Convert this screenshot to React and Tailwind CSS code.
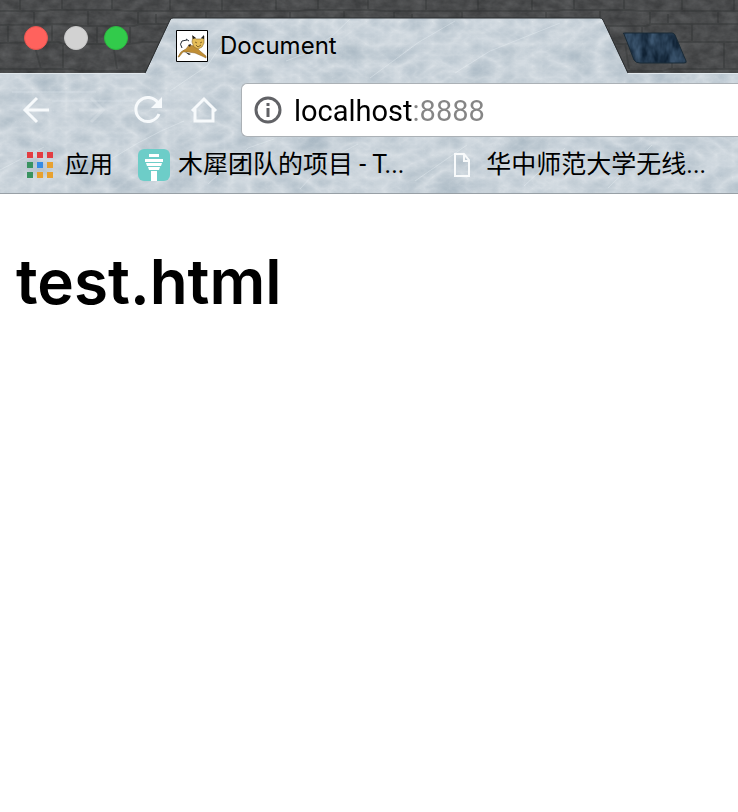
import React from 'react';

const latin = "font-[Inter,'Noto_Sans_CJK_SC',sans-serif]";

function Backdrop() {
  return (
    <svg className="absolute inset-0 h-full w-full" aria-hidden="true">
      <defs>
        <filter id="marble" x="0" y="0" width="100%" height="100%" colorInterpolationFilters="sRGB">
          <feTurbulence type="turbulence" baseFrequency="0.03 0.045" numOctaves="5" seed="8" />
          <feColorMatrix values="-0.18 -0.05 0 0 0.86  -0.15 -0.04 0 0 0.885  -0.13 -0.03 0 0 0.905  0 0 0 0 1" />
          <feComposite in2="SourceGraphic" operator="in" />
        </filter>
        <filter id="stone" x="0" y="0" width="100%" height="100%" colorInterpolationFilters="sRGB">
          <feTurbulence type="fractalNoise" baseFrequency="0.08 0.12" numOctaves="4" seed="3" />
          <feColorMatrix values="0.16 0 0 0 0.21  0.16 0 0 0 0.215  0.16 0 0 0 0.22  0 0 0 0 1" />
        </filter>
        <filter id="night" x="0" y="0" width="100%" height="100%" colorInterpolationFilters="sRGB">
          <feTurbulence type="fractalNoise" baseFrequency="0.12 0.06" numOctaves="3" seed="5" />
          <feColorMatrix values="0.3 0 0 0 0  0.35 0 0 0 0.06  0.4 0 0 0 0.12  0 0 0 0 1" />
          <feComposite in2="SourceGraphic" operator="in" />
        </filter>
        <pattern id="bricks" width="256" height="73" patternUnits="userSpaceOnUse">
          <path
            d="M0 11H44L50 10H118L126 11H256M0 25L70 24 78 26H134L140 24H256M0 43L58 42 64 44H130L142 42H256M0 69H72L80 71H150L158 69H256M20 0V11M62 0V11M112 0V11M170 0V11M222 0V11M34 11V25M88 11V25M138 11V25M156 14V25M206 11V25M8 25V43M52 25V43M97 25V43M130 25V43M180 25V43M232 25V43M34 43L41 69M63 43V69M113 43L117 69M160 43V69M212 43V69"
            fill="none"
            stroke="#292b2c"
            strokeWidth="2"
            opacity="0.3"
          />
        </pattern>
      </defs>
      <rect width="100%" height="73" filter="url(#stone)" />
      <rect width="100%" height="73" fill="url(#bricks)" />
      <rect y="73" width="100%" height="121" filter="url(#marble)" />
      <svg width="738" height="194">
        <clipPath id="tab">
          <path d="M145 74L170 20Q171 18 173 18H600Q602 18 603 20L628 74Z" />
        </clipPath>
        <g clipPath="url(#tab)">
          <rect width="738" height="194" filter="url(#marble)" />
        </g>
        <path d="M145 73L170 20Q171 18 173 18H600Q602 18 603 20L628 73" fill="none" stroke="#292c2e" />
      </svg>
      <path d="M0 73.500H145M628 73.500H5000" stroke="#e1e8ed" />
      <g fill="none" stroke="#f3f8fb" strokeWidth="1" opacity="0.3">
        <path d="M88 175Q138 139 184 121M170 91L207 66 231 31M286 61Q320 51 350 19M370 78L419 42 455 21M455 73L490 51 560 23M208 184L248 148 274 139M300 189Q326 158 358 144M415 181L467 145M524 186L565 148M608 188L652 145M12 92H96M52 101H133M0 170L44 147" />
      </g>
      <path d="M624 34Q622 33 625 33H672Q674 33 675 35L686 61Q687 63 684 63H640Q636 63 634 60Z" fill="#26465d" filter="url(#night)" />
      <path d="M624 34Q622 33 625 33H672Q674 33 675 35L686 61Q687 63 684 63H640Q636 63 634 60Z" fill="none" stroke="#1b2b37" />
    </svg>
  );
}

function TomcatIcon() {
  return (
    <svg className="size-8 shrink-0" viewBox="0 0 32 32" aria-hidden="true">
      <path d="M.5.5H31.500V31.500H.5Z" fill="#fff" stroke="#000" />
      <path d="M2 27Q4 21 10 19L13 15 19 16 24 21 30 26 30 28 26 26 19 23 12 22 7 22 3 27Z" fill="#c08e35" stroke="#8a6426" strokeWidth=".5" />
      <path d="M17 6L20 9H25L28 6 28 13 26 17 22 19 18 17 16 12Z" fill="#e5bd58" stroke="#8a6b2c" strokeWidth=".6" />
      <path d="M16 5L20 8 17 9ZM28 5L25 8 28 9ZM12 15L15 14 14 17ZM9 22L15 24 13 25Z" fill="#222" />
      <path d="M19 12L21 13M24 13L26 12M20 15L22 17 25 15" fill="none" stroke="#866729" strokeWidth="1" />
      <path d="M6 18Q3 14 6 11L11 10M10 9L13 11" fill="none" stroke="#222a35" strokeWidth="1" />
    </svg>
  );
}

function BackIcon({ forward = false }) {
  return (
    <svg className={forward ? 'size-8 rotate-180 opacity-20' : 'size-8'} viewBox="0 0 32 32" fill="none" stroke="#f7fafc" strokeWidth="3" aria-hidden="true">
      <path d="M29 16H5M17 4L5 16 17 28" />
    </svg>
  );
}

function ReloadIcon() {
  return (
    <svg className="size-8" viewBox="0 0 32 32" aria-hidden="true">
      <path d="M26 9A12 12 0 1 0 27 20" fill="none" stroke="#f7fafc" strokeWidth="3" />
      <path d="M30 3V14H19Z" fill="#f7fafc" />
    </svg>
  );
}

function HomeIcon() {
  return (
    <svg className="size-8" viewBox="0 0 32 32" fill="none" stroke="#f7fafc" strokeWidth="3" aria-hidden="true">
      <path d="M4 17L16 5 28 17M7 15V27H25V15" />
    </svg>
  );
}

function AppsIcon() {
  const colors = ['#e33d42', '#e33d42', '#e33d42', '#399360', '#358be5', '#e8a12f', '#399360', '#e8a12f', '#e8a12f'];
  return (
    <svg className="size-[26px] shrink-0" viewBox="0 0 26 26" aria-hidden="true">
      {colors.map((fill, i) => <rect key={i} x={(i % 3) * 10} y={Math.floor(i / 3) * 10} width="6" height="6" fill={fill} />)}
    </svg>
  );
}

function TowerIcon() {
  return (
    <svg className="size-8 shrink-0" viewBox="0 0 32 32" aria-hidden="true">
      <rect width="32" height="32" rx="6" fill="#6dcdc8" />
      <path d="M11 5H21V8H11ZM7 10H25V13H7ZM8 14H24L23 17H9ZM10 18H22L21 21H11ZM13 22H19V32H13Z" fill="#fff" />
    </svg>
  );
}

function PageIcon() {
  return (
    <svg className="h-6 w-4 shrink-0" viewBox="0 0 16 24" fill="none" stroke="#f8fafb" strokeWidth="2" aria-hidden="true">
      <path d="M1 1H10L15 7V23H1ZM10 1V8H15" />
    </svg>
  );
}

export default function App() {
  return (
    <div className={`min-h-screen overflow-hidden bg-white text-black ${latin}`}>
      <header className="relative isolate h-[194px] overflow-hidden border-b border-[#98a0a6]">
        <Backdrop />
        <div className="relative flex h-[73px] items-center pt-[3px] pl-6">
          <div className="flex w-[152px] gap-4">
            <button aria-label="Close" className="size-6 rounded-full border border-[#e75550] bg-[#ff625d]" />
            <button aria-label="Minimize" className="size-6 rounded-full border border-[#c6c6c6] bg-[#d2d2d2]" />
            <button aria-label="Zoom" className="size-6 rounded-full border border-[#2cb740] bg-[#32cb4b]" />
          </div>
          <div className="flex items-center gap-3 pt-4">
            <TomcatIcon />
            <span className="text-2xl leading-8">Document</span>
          </div>
        </div>
        <div className="relative flex items-center pt-[10px]">
          <nav aria-label="Navigation" className="flex w-[241px] shrink-0 items-center pl-5">
            <button aria-label="Back"><BackIcon /></button>
            <button aria-label="Forward" disabled className="ml-6"><BackIcon forward /></button>
            <button aria-label="Reload" className="ml-6"><ReloadIcon /></button>
            <button aria-label="Home" className="ml-6"><HomeIcon /></button>
          </nav>
          <div className="flex h-[54px] min-w-0 flex-1 items-center gap-3 rounded-l-md border border-r-0 border-[#abb1b6] bg-white pl-3">
            <svg className="size-7 shrink-0" viewBox="0 0 28 28" aria-hidden="true">
              <circle cx="14" cy="14" r="12" fill="none" stroke="#616266" strokeWidth="3" />
              <path d="M12.500 7H15.500V10H12.500ZM12.500 12H15.500V21H12.500Z" fill="#616266" />
            </svg>
            <input
              aria-label="Address"
              defaultValue="localhost:8888"
              className="w-full min-w-0 bg-[linear-gradient(90deg,#000_118px,#858585_118px)] bg-clip-text pt-[2px] font-[Roboto,sans-serif] text-[29px] leading-10 text-transparent caret-black outline-none"
            />
          </div>
        </div>
        <nav aria-label="Bookmarks" className="relative flex h-14 items-center overflow-hidden pl-[27px] font-[Roboto,'Noto_Sans_CJK_SC',sans-serif] text-[25px] leading-[34px] whitespace-nowrap">
          <a href="#apps" className="flex items-center gap-3 text-2xl leading-[34px]"><AppsIcon />应用</a>
          <a href="#project" className="ml-[25px] flex items-center gap-2"><TowerIcon />木犀团队的项目 - T...</a>
          <a href="#wireless" className="ml-[50px] flex items-center gap-4"><PageIcon />华中师范大学无线...</a>
        </nav>
      </header>
      <main className="px-4 pt-12">
        <h1 className="text-[62px] leading-[80px] font-semibold">test.html</h1>
      </main>
    </div>
  );
}
